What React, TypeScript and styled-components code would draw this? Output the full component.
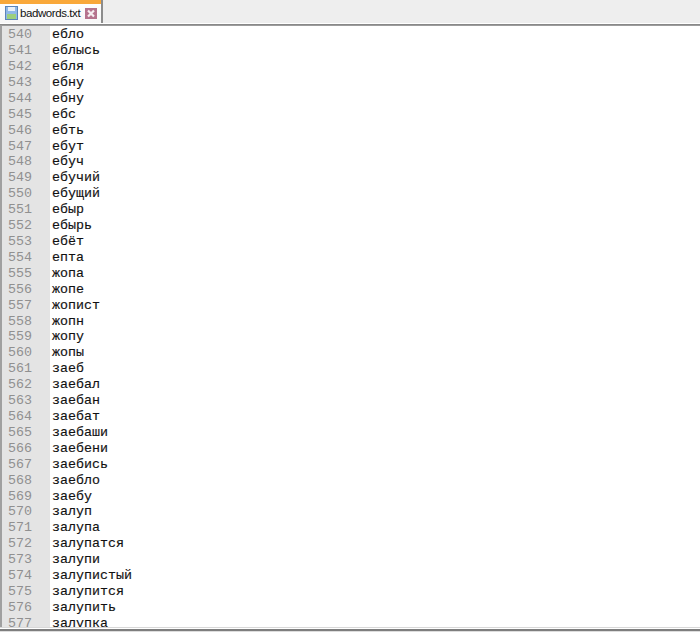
import React from "react";
import styled, { createGlobalStyle } from "styled-components";

const Global = createGlobalStyle`
  html, body { margin: 0; padding: 0; background: #fff; }
  #root { width: 700px; height: 632px; overflow: hidden; }
`;

const Window = styled.div`
  width: 700px;
  height: 632px;
  display: flex;
  flex-direction: column;
  overflow: hidden;
  background: #f0f0f0;
`;

const TabBar = styled.div`
  height: 23px;
  flex: none;
  display: flex;
  background: #eeeeee;
  border-bottom: 1px solid #ffffff;
`;

const Tab = styled.div`
  width: 103px;
  box-sizing: border-box;
  display: flex;
  align-items: center;
  padding: 3px 0 0 5px;
  background: linear-gradient(#f9a83a 0, #f9a83a 4px, #ffffff 4px, #f6f6f6 100%);
  border-right: 2px solid #8c8c8c;
`;

const TabLabel = styled.span`
  font: 11.5px "Liberation Sans", Arial, sans-serif;
  letter-spacing: -0.42px;
  color: #111;
  width: 65px;
  margin-left: 2px;
  white-space: nowrap;
`;

const RuleDark = styled.div`
  height: 2px;
  flex: none;
  background: linear-gradient(#7e7e7e, #a6a6a6);
`;

const Editor = styled.div`
  flex: 1;
  min-height: 0;
  display: flex;
  overflow: hidden;
  background: #fff;
  border-left: 2px solid #a0a0a0;
`;

const Gutter = styled.div`
  width: 48px;
  flex: none;
  box-sizing: border-box;
  padding: 1.24px 0 0 6px;
  background: #e4e4e4;
  color: #909090;
  font: 13.33px/15.92px "Liberation Mono", "Courier New", monospace;
`;

const Text = styled.div`
  padding: 1.24px 0 0 2px;
  color: #111;
  font: 13.33px/15.92px "Liberation Mono", "Courier New", monospace;
  -webkit-text-stroke: 0.15px #111;
  white-space: pre;
`;

const Line = styled.div`
  height: 15.92px;
`;

const Footer = styled.div`
  height: 5px;
  flex: none;
  background: linear-gradient(#d8d8d8 0 1px, #ffffff 1px 2px, #7e7e7e 2px 4px, #dddddd 4px);
`;

const words = "ебло еблысь ебля ебну ебну ебс ебть ебут ебуч ебучий ебущий ебыр ебырь ебёт епта жопа жопе жопист жопн жопу жопы заеб заебал заебан заебат заебаши заебени заебись заебло заебу залуп залупа залупатся залупи залупистый залупится залупить залупка".split(" ");

const FileIcon = () => (
  <svg width="13" height="14" viewBox="0 0 13 14">
    <rect x="0.5" y="0.5" width="12" height="13" fill="#8fb8e8" stroke="#5b84b8" />
    <rect x="3" y="1" width="7" height="4" fill="#e8f0fa" />
    <rect x="2" y="8" width="9" height="5" fill="#9ccf7e" />
  </svg>
);

const CloseIcon = () => (
  <svg width="12" height="11" viewBox="0 0 12 11">
    <rect width="12" height="11" fill="#b5738d" />
    <path d="M3 2.5 L9 8.5 M9 2.5 L3 8.5" stroke="#f6eef1" strokeWidth="2.2" />
  </svg>
);

export default function App() {
  return (
    <Window>
      <Global />
      <TabBar>
        <Tab>
          <FileIcon />
          <TabLabel>badwords.txt</TabLabel>
          <CloseIcon />
        </Tab>
      </TabBar>
      <RuleDark />
      <Editor>
        <Gutter>
          {words.map((_, i) => (
            <Line key={i}>{540 + i}</Line>
          ))}
        </Gutter>
        <Text>
          {words.map((w, i) => (
            <Line key={i}>{w}</Line>
          ))}
        </Text>
      </Editor>
      <Footer />
    </Window>
  );
}
